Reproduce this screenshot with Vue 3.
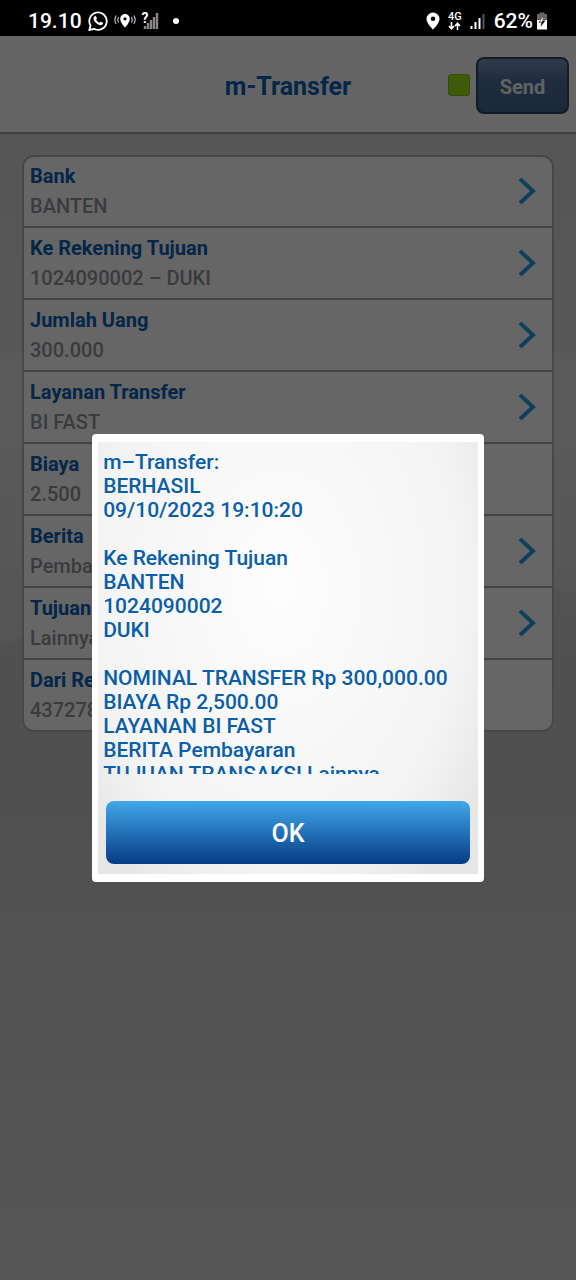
<script setup>
import { ref } from 'vue'

const open = ref(true)

const rows = [
  { label: 'Bank', value: 'BANTEN', link: true },
  { label: 'Ke Rekening Tujuan', value: '1024090002 – DUKI', link: true },
  { label: 'Jumlah Uang', value: '300.000', link: true },
  { label: 'Layanan Transfer', value: 'BI FAST', link: true },
  { label: 'Biaya', value: '2.500', link: false },
  { label: 'Berita', value: 'Pembayaran', link: true },
  { label: 'Tujuan Transaksi', value: 'Lainnya', link: true },
  { label: 'Dari Rekening', value: '437278', link: false },
]

const receipt = [
  ['m–Transfer:', 'BERHASIL', '09/10/2023 19:10:20'],
  ['Ke Rekening Tujuan', 'BANTEN', '1024090002', 'DUKI'],
  [
    'NOMINAL TRANSFER Rp 300,000.00',
    'BIAYA Rp 2,500.00',
    'LAYANAN BI FAST',
    'BERITA Pembayaran',
    'TUJUAN TRANSAKSI Lainnya',
  ],
]
</script>

<template>
  <div class="screen">
    <div class="status">
      <div class="status-group">
        <span class="clock">19.10</span>
        <svg width="20" height="22" viewBox="0 0 20 22" aria-hidden="true">
          <path d="M1.2 20.2 2.6 15.6A8.7 8.7 0 1 1 6 18.8Z" fill="none" stroke="#fff" stroke-width="1.8" stroke-linejoin="round" />
          <path d="M6.2 6.6c.7-.8 1.6-.8 1.9-.1l.8 1.8c.1.4-.8 1.2-.7 1.5.7 1.3 1.8 2.3 3.2 2.9.4.1 1-1.1 1.4-1l1.9.9c.6.3.4 1.3-.3 1.9-1.1 1-2.9.9-5-.5-1.7-1.1-3.1-2.6-3.7-4.2-.4-1.2-.2-2.4.5-3.2Z" fill="#fff" />
        </svg>
        <svg width="22" height="20" viewBox="0 0 22 20" aria-hidden="true">
          <path fill-rule="evenodd" d="M11 3a4.800 4.800 0 0 0-4.800 4.900C6.200 11.500 11 16.500 11 16.500s4.800-5 4.800-8.600A4.800 4.800 0 0 0 11 3Zm0 3.200a1.600 1.600 0 1 1 0 3.200A1.600 1.600 0 0 1 11 6.200Z" fill="#fff" />
          <path d="M4.600 6q-1.600 2.800 0 5.500M2.200 4.500q-2.700 4.300 0 8.500M17.400 6q1.600 2.800 0 5.500M19.800 4.500q2.700 4.300 0 8.500" fill="none" stroke="#bbb" stroke-width="1.200" />
        </svg>
        <span class="unknown">
          <span class="question">?</span>
          <svg width="17" height="18" viewBox="0 0 17 18" aria-hidden="true">
            <path d="M3 17v-3M6 17v-6M9 17V8M12 17V5M15 17V1" stroke="#888" stroke-width="2.400" />
          </svg>
        </span>
        <span class="dot"></span>
      </div>
      <div class="status-group right">
        <svg width="14" height="18" viewBox="0 0 14 18" aria-hidden="true">
          <path fill-rule="evenodd" d="M7 .5A6.500 6.500 0 0 0 .5 7C.5 11.500 7 17.500 7 17.500S13.500 11.500 13.500 7A6.500 6.500 0 0 0 7 .5ZM7 4.500A2.300 2.300 0 1 1 7 9.100 2.300 2.300 0 0 1 7 4.500Z" fill="#fff" />
        </svg>
        <span class="network">
          <span>4G</span>
          <svg width="13" height="8" viewBox="0 0 13 8" aria-hidden="true">
            <path d="M3.500 0v6.500M1 4l2.500 2.700L6 4M9.500 8V1.500M7 4l2.500-2.700L12 4" fill="none" stroke="#fff" stroke-width="1.600" />
          </svg>
        </span>
        <svg width="16" height="16" viewBox="0 0 16 16" aria-hidden="true">
          <path d="M1.500 16v-3M5.500 16V9M9.500 16V5" stroke="#fff" stroke-width="2" />
          <path d="M13.500 16V1" stroke="#555" stroke-width="2" />
        </svg>
        <span class="battery">
          <span class="clock">62%</span>
          <svg width="12" height="18" viewBox="0 0 12 18" aria-hidden="true">
            <path d="M3.500 2V.5h5V2H11v6H1V2Z" fill="#666" />
            <path d="M1 8h10v9.500H1Z" fill="#fff" />
            <path d="M7.500 4 2.500 10.500h3L4.500 15l5-6.500h-3Z" fill="#111" />
            <path d="M7.300 4.500 3.500 9.800h2.600Z" fill="#fff" />
          </svg>
        </span>
      </div>
    </div>

    <div class="app">
      <header class="bar">
        <h1 class="title">m-Transfer</h1>
        <div class="actions">
          <span class="indicator"></span>
          <button class="send" type="button">Send</button>
        </div>
      </header>

      <main class="content">
        <svg class="backdrop" viewBox="0 0 576 300" preserveAspectRatio="none" aria-hidden="true">
          <path d="M0 0H576V240Q300 190 0 292Z" fill="#fff" fill-opacity="0.200" />
        </svg>
        <ul class="card">
          <li v-for="row in rows" :key="row.label" class="row">
            <div class="texts">
              <span class="label">{{ row.label }}</span>
              <span class="value">{{ row.value }}</span>
            </div>
            <svg v-if="row.link" width="18" height="28" viewBox="0 0 18 28" aria-hidden="true">
              <path d="M2 2 15 14 2 26" fill="none" stroke="#1ea4e4" stroke-width="4" />
            </svg>
          </li>
        </ul>
      </main>

      <div v-if="open" class="overlay">
        <section class="dialog" role="dialog" aria-modal="true" aria-label="m-Transfer">
          <div class="panel">
            <div class="receipt" tabindex="0">
              <p v-for="(group, i) in receipt" :key="i" class="group">
                <span v-for="line in group" :key="line" class="line">{{ line }}</span>
              </p>
            </div>
            <button class="ok" type="button" @click="open = false">OK</button>
          </div>
        </section>
      </div>
    </div>
  </div>
</template>

<style>
body {
  margin: 0;
  background: #000;
}
</style>

<style scoped>
.screen {
  display: flex;
  flex-direction: column;
  min-height: 100vh;
  font-family: Roboto, "Noto Sans", sans-serif;
  font-size: 20px;
  line-height: 24px;
}

.status {
  display: flex;
  align-items: center;
  justify-content: space-between;
  height: 36px;
  box-sizing: border-box;
  padding: 6px 28px 0;
  background: #000;
  color: #fff;
}

.status-group {
  display: flex;
  align-items: center;
  gap: 6px;
}

.right {
  gap: 8px;
}

.clock {
  font-size: 21px;
  font-weight: 500;
}

.unknown {
  display: flex;
  position: relative;
}

.question {
  position: absolute;
  left: 0;
  top: -2px;
  font-size: 14px;
  font-weight: 700;
  line-height: 16px;
}

.dot {
  width: 6px;
  height: 6px;
  margin-left: 8px;
  border-radius: 50%;
  background: #fff;
}

.network {
  display: flex;
  flex-direction: column;
  align-items: center;
  font-size: 11px;
  font-weight: 500;
  line-height: 10px;
}

.battery {
  display: flex;
  align-items: center;
  gap: 3px;
}

.app {
  position: relative;
  display: flex;
  flex: 1;
  flex-direction: column;
}

.bar {
  display: grid;
  grid-template-columns: 1fr auto 1fr;
  align-items: center;
  height: 98px;
  box-sizing: border-box;
  padding: 2px 7px 0;
  border-bottom: 2px solid #a0a0a0;
  background: #fcfcfc;
}

.title {
  grid-column: 2;
  margin: 0;
  padding-top: 4px;
  color: #0a60b4;
  font-size: 25px;
  font-weight: 700;
}

.actions {
  display: flex;
  align-items: center;
  justify-content: flex-end;
  gap: 6px;
}

.indicator {
  width: 20px;
  height: 20px;
  border: 1px solid #86c010;
  border-radius: 3px;
  background: #9ee014;
}

.send {
  width: 93px;
  height: 57px;
  padding-top: 4px;
  border: 2px solid #2c4468;
  border-radius: 8px;
  background: linear-gradient(#7c92b4, #50709e 40%, #42648e);
  color: #f4f4f4;
  font: inherit;
  font-weight: 700;
}

.content {
  position: relative;
  flex: 1;
  padding: 21px 22px 0;
  background: linear-gradient(#d8d8d8 0, #dadada 300px, #c6c6c6 560px, #cacaca 720px, #d6d6d6 100%);
}

.backdrop {
  position: absolute;
  left: 0;
  top: 219px;
  width: 100%;
  height: 300px;
}

.card {
  position: relative;
  margin: 0;
  padding: 0;
  border: 2px solid #b2b2b2;
  border-radius: 12px;
  background: #fff;
  list-style: none;
}

.row {
  display: flex;
  align-items: center;
  justify-content: space-between;
  height: 72px;
  box-sizing: border-box;
  padding: 0 16px 0 6px;
  border-bottom: 2px solid #a8a8a8;
}

.row:first-child {
  height: 71px;
  padding-bottom: 2px;
}

.row:last-child {
  height: 70px;
  border-bottom: 0;
}

.texts {
  display: flex;
  flex-direction: column;
  gap: 6px;
}

.label {
  color: #0a60b4;
  font-weight: 700;
}

.value {
  color: #92949c;
  font-weight: 500;
}

.overlay {
  position: absolute;
  inset: 0;
  display: flex;
  align-items: center;
  justify-content: center;
  background: rgba(0, 0, 0, 0.6);
}

.dialog {
  width: 68%;
  box-sizing: border-box;
  padding: 8px 6px;
  border-radius: 4px;
  background: #fff;
}

.panel {
  padding: 8px 8px 10px;
  background: radial-gradient(ellipse 64% 84% at 48% 34%, #fdfdfd 0, #f4f4f4 75%, #e6e6e6 100%);
}

.receipt {
  max-height: 324px;
  margin-left: -3px;
  overflow-y: auto;
  scrollbar-width: none;
  color: #0a5fa8;
  font-size: 21px;
  font-weight: 500;
}

.group {
  margin: 0 0 24px;
}

.group:last-child {
  margin-bottom: 0;
}

.line {
  display: block;
}

.ok {
  display: block;
  width: 100%;
  height: 63px;
  margin-top: 27px;
  padding-top: 4px;
  border: 0;
  border-radius: 8px;
  background: linear-gradient(#42a8e8, #2474ba 48%, #053c86);
  color: #fff;
  font: inherit;
  font-size: 25px;
  font-weight: 500;
}
</style>
